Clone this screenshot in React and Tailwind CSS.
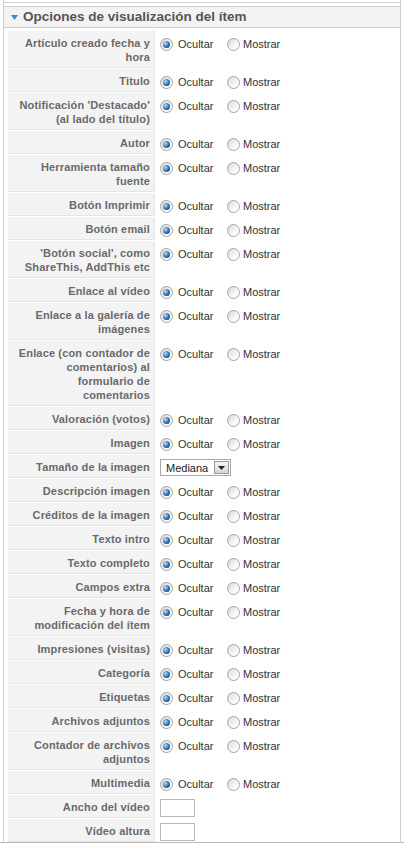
import React from 'react'

// [label, control] — control: 'radio' | 'select' | 'input'
const ROWS = [
  ['Artículo creado fecha y hora', 'radio'],
  ['Titulo', 'radio'],
  ["Notificación 'Destacado' (al lado del título)", 'radio'],
  ['Autor', 'radio'],
  ['Herramienta tamaño fuente', 'radio'],
  ['Botón Imprimir', 'radio'],
  ['Botón email', 'radio'],
  ["'Botón social', como ShareThis, AddThis etc", 'radio'],
  ['Enlace al vídeo', 'radio'],
  ['Enlace a la galería de imágenes', 'radio'],
  ['Enlace (con contador de comentarios) al formulario de comentarios', 'radio'],
  ['Valoración (votos)', 'radio'],
  ['Imagen', 'radio'],
  ['Tamaño de la imagen', 'select'],
  ['Descripción imagen', 'radio'],
  ['Créditos de la imagen', 'radio'],
  ['Texto intro', 'radio'],
  ['Texto completo', 'radio'],
  ['Campos extra', 'radio'],
  ['Fecha y hora de modificación del ítem', 'radio'],
  ['Impresiones (visitas)', 'radio'],
  ['Categoría', 'radio'],
  ['Etiquetas', 'radio'],
  ['Archivos adjuntos', 'radio'],
  ['Contador de archivos adjuntos', 'radio'],
  ['Multimedia', 'radio'],
  ['Ancho del vídeo', 'input'],
  ['Vídeo altura', 'input'],
]

function Radio({ checked }) {
  return (
    <span className="relative inline-block w-[13px] h-[13px] shrink-0 rounded-full border border-[#a4a4a4] bg-[linear-gradient(135deg,#d8d8d8,#fbfbfb_70%)]">
      {checked && (
        <span className="absolute left-[2px] top-[2px] w-[7px] h-[7px] rounded-full bg-[radial-gradient(circle_at_35%_35%,#b4dcf8,#2a6cab_55%,#0f3e70)]" />
      )}
    </span>
  )
}

function Control({ type }) {
  if (type === 'select') {
    return (
      <div className="pt-[4px]">
        <div className="flex items-center w-[71px] h-[17px] border border-[#a8a8a8] bg-white">
          <span className="flex-1 pl-[5px] text-[11px] leading-[14px] text-[#222]">Mediana</span>
          <span className="flex items-center justify-center w-[15px] h-[13px] mr-[1px] border border-[#9a9a9a] bg-[linear-gradient(#f4f4f4,#d6d6d6)]">
            <svg width="7" height="4" viewBox="0 0 7 4"><polygon points="0,0 7,0 3.5,4" fill="#222" /></svg>
          </span>
        </div>
      </div>
    )
  }
  if (type === 'input') {
    return (
      <div className="pt-[4px]">
        <div className="w-[35px] h-[18px] border border-[#b8b8b8] bg-white" />
      </div>
    )
  }
  return (
    <div className="flex items-center h-[14px] mt-[6px] text-[11px] leading-[14px] text-[#333]">
      <Radio checked />
      <span className="ml-[5px] w-[49px]">Ocultar</span>
      <Radio />
      <span className="ml-[3px]">Mostrar</span>
    </div>
  )
}

export default function App() {
  return (
    <div className="w-[404px] h-[843px] overflow-hidden bg-white flex flex-col font-['Liberation_Sans',Arial,sans-serif]">
      <div className="flex-1 overflow-hidden ml-[3px] w-[398px] border-x border-[#cfcfcf] flex flex-col">
        {/* end of previous panel */}
        <div className="h-[3px] shrink-0 border-b border-[#cfcfcf]" />

        {/* panel header */}
        <div className="mt-[3px] h-[22px] shrink-0 flex items-center gap-[5px] pl-[7px] bg-[#f3f3f3] border-y border-[#cfcfcf]">
          <svg width="7" height="5" viewBox="0 0 7 5" className="mt-[1px]">
            <polygon points="0,0 7,0 3.5,5" fill="#3d86c6" />
          </svg>
          <h3 className="text-[13.5px] font-bold text-[#555]">
            Opciones de visualización del ítem
          </h3>
        </div>

        {/* options table */}
        <div className="pt-[2px] pl-[4px]">
          {ROWS.map(([label, type]) => (
            <div key={label} className="flex border-t border-white">
              <div className="w-[147px] shrink-0 pt-[5px] pb-[3px] pl-[6px] pr-[4px] text-right text-[11px] leading-[14px] font-bold tracking-[0.15px] text-[#6a6a6a] bg-[#f3f3f3] border-b border-r border-[#e4e4e4]">
                {label}
              </div>
              <div className="flex-1 pl-[5px]">
                <Control type={type} />
              </div>
            </div>
          ))}
        </div>
      </div>
      <div className="h-px shrink-0 bg-[#b9b9b9]" />
    </div>
  )
}
